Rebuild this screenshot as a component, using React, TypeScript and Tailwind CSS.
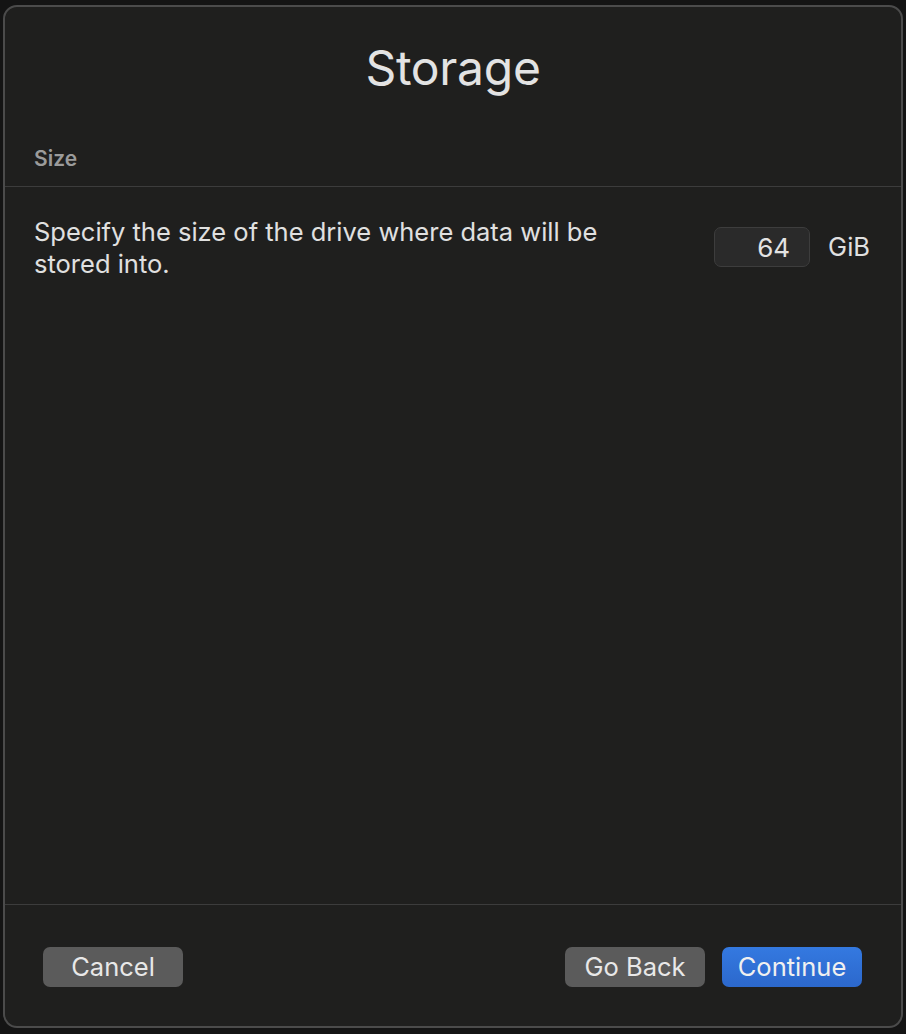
export default function App() {
  return (
    <div className="w-[906px] h-[1034px] bg-[#141414] pt-[5px] pl-[3px] font-['Inter',sans-serif]">
      <div className="w-[900px] h-[1023px] rounded-[14px] border-2 border-[#4b4b4b] bg-[#1f1f1e] flex flex-col overflow-hidden">
        {/* Header */}
        <div className="h-[128px] flex items-start justify-center pt-[31px]">
          <h1 className="text-[48px] leading-[60px] text-[#e3e3e3] tracking-[-0.3px]">Storage</h1>
        </div>
        <div className="px-[29px] h-[51px] flex items-start pt-[11px]">
          <span className="text-[21px] leading-[26px] font-semibold text-[#9b9b9b]">Size</span>
        </div>
        <div className="h-px bg-[#3c3c3c]" />

        {/* Content */}
        <div className="flex-1 px-[29px] pt-[29px] flex items-start justify-between">
          <p className="text-[25.5px] leading-[32px] text-[#e0e0e0] w-[600px]">
            Specify the size of the drive where data will be stored into.
          </p>
          <div className="flex items-center gap-[18px] mt-[11px] mr-[2px]">
            <div className="w-[96px] h-[40px] rounded-[7px] bg-[#2a2a2a] border border-[#3d3d3d] flex items-center justify-end pr-[19px] text-[26px] text-[#e3e3e3]">
              64
            </div>
            <span className="text-[25.5px] text-[#e0e0e0]">GiB</span>
          </div>
        </div>

        <div className="h-px bg-[#3c3c3c]" />
        {/* Footer */}
        <div className="h-[121px] flex items-start justify-between pl-[38px] pr-[39px] pt-[42px]">
          <button className="w-[140px] h-[40px] rounded-[7px] bg-[#5b5b5b] text-[25.5px] text-[#e8e8e8]">Cancel</button>
          <div className="flex gap-[17px]">
            <button className="w-[140px] h-[40px] rounded-[7px] bg-[#5b5b5b] text-[25.5px] text-[#e8e8e8]">Go Back</button>
            <button className="w-[140px] h-[40px] rounded-[7px] bg-gradient-to-b from-[#3479e0] to-[#2c68cc] text-[25.5px] text-[#f0f0f0]">Continue</button>
          </div>
        </div>
      </div>
    </div>
  );
}
